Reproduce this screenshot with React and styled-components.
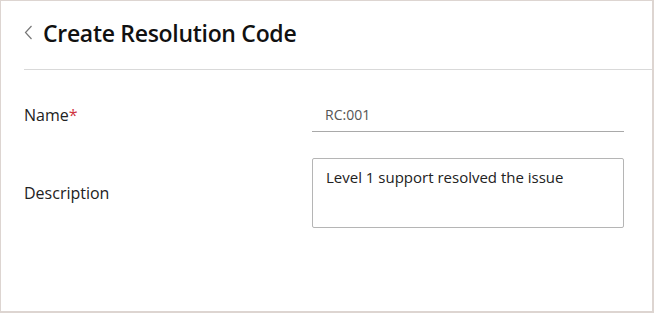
import React from 'react'
import styled, {createGlobalStyle} from "styled-components";

const GlobalStyle = createGlobalStyle`
  html, body {
    margin: 0;
    padding: 0;
    background: #ffffff;
  }
  body {
    font-family: "Open Sans", "Liberation Sans", sans-serif;
    color: #1a1a1a;
  }
`;

const Page = styled.div`
  box-sizing: border-box;
  width: 654px;
  height: 313px;
  border: 1px solid #ddd5d1;
  border-bottom-width: 2px;
  border-right-width: 2px;
  background: #fff;
`;
const Header = styled.div`
  display: flex;
  align-items: center;
  gap: 10px;
  height: 69px;
  margin-left: 23px;
  border-bottom: 1px solid #d9d9d9;
  box-sizing: border-box;
  padding-bottom: 5px;
`;
const BackButton = styled.button`
  display: flex;
  align-items: center;
  border: none;
  background: none;
  padding: 0;
  margin: 0;
  cursor: pointer;
`;
const Title = styled.h1`
  margin: 0;
  font-size: 23px;
  font-weight: 600;
  color: #111;
  letter-spacing: -0.3px;
`;
const Form = styled.div`
  padding: 27px 29px 0 23px;
  display: flex;
  flex-direction: column;
  gap: 26px;
`;
const Row = styled.div`
  display: grid;
  grid-template-columns: 288px 1fr;
  align-items: center;
`;
const Label = styled.label`
  font-size: 16px;
  color: #222;
`;
const Required = styled.span`
  color: #d0343f;
`;
const LineInput = styled.input`
  box-sizing: border-box;
  width: 312px;
  height: 35px;
  border: none;
  border-bottom: 1px solid #a9a9a9;
  padding: 0 13px;
  font-family: inherit;
  font-size: 14px;
  color: #555;
  outline: none;
  background: transparent;
`;
const TextArea = styled.textarea`
  box-sizing: border-box;
  width: 312px;
  height: 70px;
  border: 1px solid #b5b5b5;
  border-radius: 2px;
  padding: 8px 13px;
  font-family: inherit;
  font-size: 15px;
  line-height: 20px;
  color: #222;
  resize: none;
  outline: none;
`;

const App = () => {
    return (
        <Page>
            <GlobalStyle/>
            <Header>
                <BackButton aria-label="Back">
                    <svg width="9" height="15" viewBox="0 0 9 15">
                        <path d="M7.5 1 L1.5 7.5 L7.5 14" fill="none" stroke="#777" strokeWidth="1.2"/>
                    </svg>
                </BackButton>
                <Title>Create Resolution Code</Title>
            </Header>
            <Form>
                <Row>
                    <Label>Name<Required>*</Required></Label>
                    <LineInput defaultValue="RC:001"/>
                </Row>
                <Row>
                    <Label>Description</Label>
                    <TextArea defaultValue="Level 1 support resolved the issue"/>
                </Row>
            </Form>
        </Page>
    )
}
export default App
